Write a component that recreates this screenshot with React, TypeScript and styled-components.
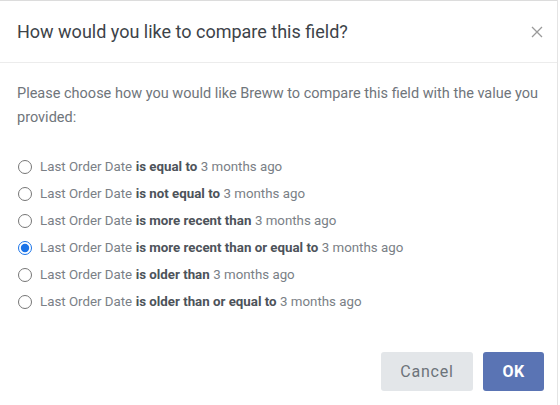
import React, { useState } from 'react';
import styled, { createGlobalStyle } from 'styled-components';

const GlobalStyle = createGlobalStyle`
  html, body {
    margin: 0;
    padding: 0;
    background: #ffffff;
  }
  body {
    font-family: Roboto, "Liberation Sans", Arial, sans-serif;
  }
`;

const Modal = styled.div`
  width: 558px;
  height: 405px;
  box-sizing: border-box;
  border-top: 1px solid #dcdcdc;
  border-right: 1px solid #e4e4e4;
  background: #fff;
  display: flex;
  flex-direction: column;
`;

const Header = styled.div`
  display: flex;
  align-items: center;
  justify-content: space-between;
  height: 61px;
  padding: 0 14px 0 17px;
  border-bottom: 1px solid #ececec;
`;

const Title = styled.h5`
  margin: 0;
  font-size: 18px;
  font-weight: 400;
  color: #3d4349;
  line-height: 27px;
`;

const CloseButton = styled.button`
  border: none;
  background: none;
  padding: 0;
  width: 12px;
  height: 12px;
  display: flex;
  align-items: center;
  justify-content: center;
  cursor: pointer;
`;

const Body = styled.div`
  padding: 19px 17px 0 17px;
`;

const Intro = styled.p`
  margin: 0 0 23px 0;
  font-size: 14.5px;
  line-height: 24px;
  color: #6f757b;
`;

const OptionList = styled.div`
  display: flex;
  flex-direction: column;
`;

const OptionRow = styled.label`
  display: flex;
  align-items: center;
  height: 27px;
  font-size: 13.3px;
  color: #7a8086;
  cursor: pointer;
`;

const Radio = styled.input`
  width: 14px;
  height: 14px;
  margin: 0 8px 0 1px;
  accent-color: #1a73e8;
`;

const Operator = styled.b`
  font-weight: 700;
  color: #4d535a;
  margin: 0 3.5px;
`;

const Footer = styled.div`
  display: flex;
  justify-content: flex-end;
  gap: 10px;
  padding: 37px 13px 0 0;
`;

type ButtonProps = { $primary?: boolean };

const Button = styled.button<ButtonProps>`
  height: 39px;
  border: none;
  border-radius: 3px;
  font-family: Roboto, "Liberation Sans", Arial, sans-serif;
  font-size: 16px;
  cursor: pointer;
  padding: 0 19px;
  min-width: ${(p) => (p.$primary ? '61px' : '92px')};
  letter-spacing: ${(p) => (p.$primary ? '0.3px' : '0.8px')};
  font-weight: ${(p) => (p.$primary ? 700 : 400)};
  background: ${(p) => (p.$primary ? '#5a74b4' : '#e3e6e9')};
  color: ${(p) => (p.$primary ? '#ffffff' : '#6c737a')};
`;

const options = [
  'is equal to',
  'is not equal to',
  'is more recent than',
  'is more recent than or equal to',
  'is older than',
  'is older than or equal to',
];

export default function App() {
  const [selected, setSelected] = useState(3);

  return (
    <>
      <GlobalStyle />
      <Modal>
        <Header>
          <Title>How would you like to compare this field?</Title>
          <CloseButton aria-label="Close">
            <svg width="12" height="12" viewBox="0 0 12 12">
              <path d="M1 1 L11 11 M11 1 L1 11" stroke="#9a9a9a" strokeWidth="1.3" />
            </svg>
          </CloseButton>
        </Header>
        <Body>
          <Intro>
            Please choose how you would like Breww to compare this field with the value you
            provided:
          </Intro>
          <OptionList>
            {options.map((op, i) => (
              <OptionRow key={op}>
                <Radio
                  type="radio"
                  name="compare"
                  checked={selected === i}
                  onChange={() => setSelected(i)}
                />
                Last Order Date<Operator>{op}</Operator>3 months ago
              </OptionRow>
            ))}
          </OptionList>
        </Body>
        <Footer>
          <Button>Cancel</Button>
          <Button $primary>OK</Button>
        </Footer>
      </Modal>
    </>
  );
}
